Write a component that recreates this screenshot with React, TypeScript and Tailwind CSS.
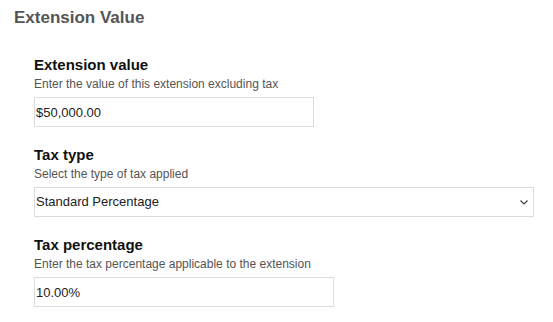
import { useState } from "react";

const field = "font-['Liberation_Sans',Arial,sans-serif]";

function Section({
  label,
  help,
  children,
}: {
  label: string;
  help: string;
  children: React.ReactNode;
}) {
  return (
    <div className="mb-[19px]">
      <div className="text-[15px] leading-[18px] font-bold text-[#111]">{label}</div>
      <div className="mt-[2px] text-[12px] leading-[16px] text-[#555]">{help}</div>
      <div className="mt-[5px]">{children}</div>
    </div>
  );
}

export default function App() {
  const [value, setValue] = useState("$50,000.00");
  const [taxType, setTaxType] = useState("Standard Percentage");
  const [percent, setPercent] = useState("10.00%");

  return (
    <div className={`w-[553px] h-[322px] bg-white overflow-hidden ${field}`}>
      <h2 className="ml-[14px] mt-[8px] text-[17px] leading-[20px] font-bold text-[#555]">
        Extension Value
      </h2>

      <div className="pl-[34px] pt-[28px]">
        <Section label="Extension value" help="Enter the value of this extension excluding tax">
          <input
            value={value}
            onChange={(e) => setValue(e.target.value)}
            className="block w-[280px] h-[30px] border border-[#dcdcdc] px-[1px] text-[13px] text-[#222] outline-none"
          />
        </Section>

        <Section label="Tax type" help="Select the type of tax applied">
          <div className="relative w-[500px]">
            <select
              value={taxType}
              onChange={(e) => setTaxType(e.target.value)}
              className="block w-full h-[30px] appearance-none border border-[#dcdcdc] bg-white px-[1px] text-[13px] text-[#222] outline-none"
            >
              <option>Standard Percentage</option>
              <option>Fixed Amount</option>
              <option>Exempt</option>
            </select>
            <svg
              className="pointer-events-none absolute right-[6px] top-[13px]"
              width="8"
              height="5"
              viewBox="0 0 8 5"
              fill="none"
            >
              <path d="M0.5 0.5 L4 4 L7.5 0.5" stroke="#444" strokeWidth="1.2" />
            </svg>
          </div>
        </Section>

        <Section label="Tax percentage" help="Enter the tax percentage applicable to the extension">
          <input
            value={percent}
            onChange={(e) => setPercent(e.target.value)}
            className="block w-[300px] h-[30px] border border-[#dcdcdc] px-[1px] text-[13px] text-[#222] outline-none"
          />
        </Section>
      </div>
    </div>
  );
}
